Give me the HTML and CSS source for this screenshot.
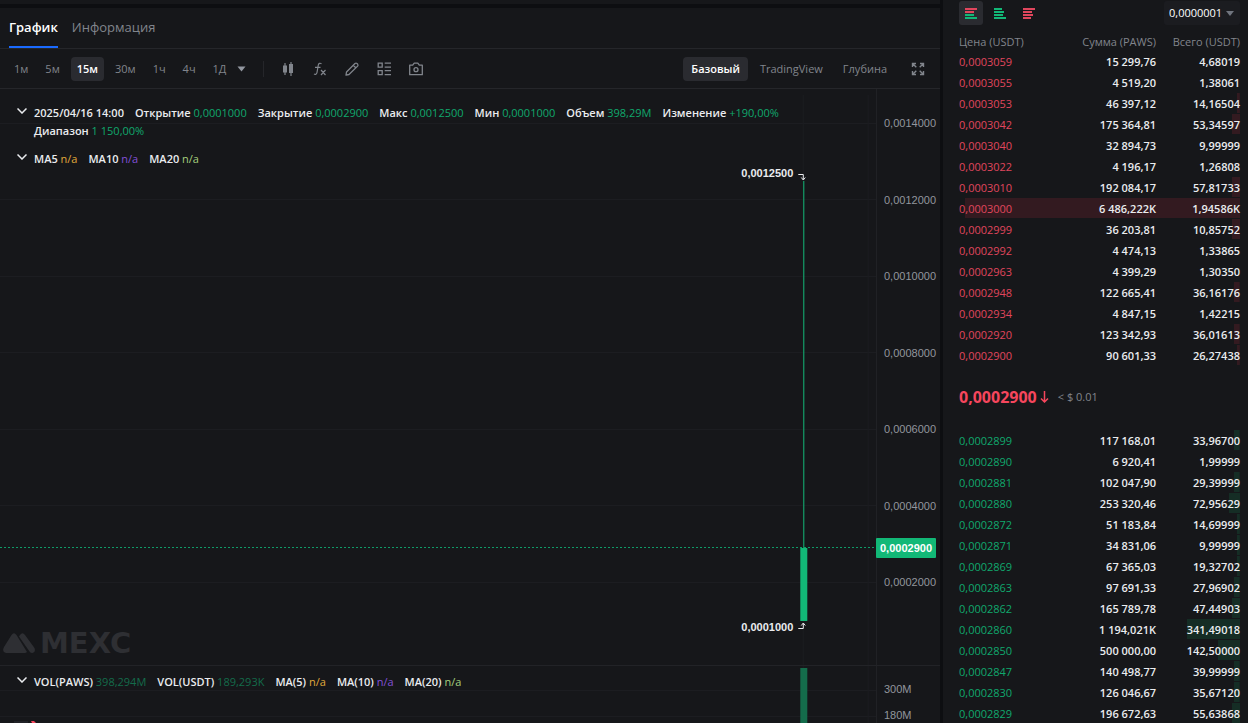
FILE: index.html
```html
<!DOCTYPE html>
<html lang="ru">
  <head>
    <meta charset="UTF-8" />
    <meta name="viewport" content="width=device-width, initial-scale=1.0" />
    <title>PAWS/USDT - MEXC</title>
    <link rel="stylesheet" href="styles.css">
  </head>
  <body>
    <main class="chart-panel">
      <nav class="tabs">
        <a class="tab active" href="#chart">График</a>
        <a class="tab" href="#info">Информация</a>
      </nav>

      <div class="toolbar">
        <div class="intervals">
          <button class="btn">1м</button>
          <button class="btn">5м</button>
          <button class="btn active">15м</button>
          <button class="btn">30м</button>
          <button class="btn">1ч</button>
          <button class="btn">4ч</button>
          <button class="btn">1Д</button>
        </div>
        <button class="more" aria-label="Интервалы">
          <svg width="9" height="6" viewBox="0 0 9 6"><path d="M0.5 0.5h8L4.5 5.5z" fill="#9297a0" /></svg>
        </button>
        <span class="divider"></span>
        <div class="tools">
          <button class="icon" aria-label="Тип графика">
            <svg viewBox="0 0 16 16" fill="currentColor"><path d="M4.400 2h1.200v2.500H7v7H5.600V14H4.400v-2.500H3v-7h1.400zM10.400 1h1.200v2H13v9h-1.400v3h-1.200v-3H9V3h1.400z" /></svg>
          </button>
          <button class="icon" aria-label="Индикаторы">
            <svg viewBox="0 0 16 16" fill="none" stroke="currentColor" stroke-width="1.200"><path d="M9.500 2.800C8 1.700 6.600 2.300 6.300 4L5 11.500c-.3 1.700-1.500 2.300-3 1.500M3 6.300h5.500M9 9l4.500 5M13.500 9L9 14" /></svg>
          </button>
          <button class="icon" aria-label="Рисование">
            <svg viewBox="0 0 16 16" fill="none" stroke="currentColor" stroke-width="1.300" stroke-linejoin="round"><path d="M2.500 11L11 2.500q1-.8 2 0l.6.600q.8 1 0 2L5 13.500l-3 .6zM9.500 4.500l2.500 2.500" /></svg>
          </button>
          <button class="icon" aria-label="Настройки">
            <svg viewBox="0 0 16 16" fill="none" stroke="currentColor" stroke-width="1.300"><path d="M2.200 2.200h4v4h-4zM2.200 9.700h4v4h-4zM8.700 2.200H15M8.700 6.200H15M8.700 9.700H15M8.700 13.700H15" /></svg>
          </button>
          <button class="icon" aria-label="Снимок">
            <svg viewBox="0 0 16 16" fill="none" stroke="currentColor" stroke-width="1.300" stroke-linejoin="round"><path d="M1.700 4.200h3l1.500-2h3.600l1.500 2h3v9.500H1.700z" /><circle cx="8" cy="8.700" r="2" /></svg>
          </button>
        </div>
        <div class="views">
          <button class="btn active">Базовый</button>
          <button class="btn">TradingView</button>
          <button class="btn">Глубина</button>
          <button class="icon" aria-label="На весь экран">
            <svg viewBox="0 0 16 16" fill="none" stroke="currentColor" stroke-width="1.400"><path d="M2.500 6V2.500H6M2.500 2.500l3.800 3.800M10 2.500h3.500V6M13.500 2.500L9.700 6.300M2.500 10v3.500H6M2.500 13.500l3.800-3.800M10 13.500h3.500V10M13.500 13.500L9.700 9.700" /></svg>
          </button>
        </div>
      </div>

      <section class="pane price-pane">
        <div class="plot">
          <svg class="canvas">
            <g class="grid">
              <path d="M0 34.500h2000M0 110.500h2000M0 187.500h2000M0 263.500h2000M0 340.500h2000M0 416.500h2000M0 493.500h2000" />
              <line x1="91.700%" x2="91.700%" y1="6" y2="100%" />
              <line x1="99.100%" x2="99.100%" y1="6" y2="100%" />
            </g>
            <line class="last-line" x1="0" x2="100%" y1="458.500" y2="458.500" />
            <svg x="91.700%" overflow="visible">
              <rect class="candle" x="0" y="92" width="1" height="367" />
              <rect class="candle" x="-3" y="459" width="7" height="73" />
              <path class="pointer" d="M-5 85.500h5v5M-2 88.500l2 2.500l2-2.500" />
              <path class="pointer" d="M-5 539.500h5v-5M-2 536.500l2-2.500l2 2.500" />
              <text class="mark" x="-10" y="88">0,0012500</text>
              <text class="mark" x="-10" y="542">0,0001000</text>
            </svg>
          </svg>
          <div class="legend">
            <div class="legend-row">
              <svg class="chevron" viewBox="0 0 10 6"><path d="M0.500 0.500L5 5l4.500-4.500" /></svg>
              <div class="legend-items">
                <span>2025/04/16 14:00</span>
                <span>Открытие <b class="up">0,0001000</b></span>
                <span>Закрытие <b class="up">0,0002900</b></span>
                <span>Макс <b class="up">0,0012500</b></span>
                <span>Мин <b class="up">0,0001000</b></span>
                <span>Объем <b class="up">398,29M</b></span>
                <span>Изменение <b class="up">+190,00%</b></span>
                <span>Диапазон <b class="up">1 150,00%</b></span>
              </div>
            </div>
            <div class="legend-row">
              <svg class="chevron" viewBox="0 0 10 6"><path d="M0.500 0.500L5 5l4.500-4.500" /></svg>
              <div class="legend-items">
                <span>MA5 <b class="ma5">n/a</b></span>
                <span>MA10 <b class="ma10">n/a</b></span>
                <span>MA20 <b class="ma20">n/a</b></span>
              </div>
            </div>
          </div>
          <div class="watermark">
            <svg width="34" height="20" viewBox="0 0 34 20" fill="currentColor"><path d="M1 14L8.500 2q2.500-3.500 5 0L24 19q-1 1-2.500 1H3Q-1.500 19 1 14zM17 2q2.500-3.500 5 0l9.500 13q1.500 4-2 5-2 0-3-1.500L16 3.500z" /></svg>
            <span>MEXC</span>
          </div>
        </div>
        <div class="axis price-axis">
          <span>0,0014000</span>
          <span>0,0012000</span>
          <span>0,0010000</span>
          <span>0,0008000</span>
          <span>0,0006000</span>
          <span>0,0004000</span>
          <span>0,0002000</span>
          <strong class="last-tag">0,0002900</strong>
        </div>
      </section>

      <section class="pane volume-pane">
        <div class="plot">
          <svg class="canvas">
            <g class="grid">
              <path d="M0 24.500h2000M0 50.500h2000" />
              <line x1="91.700%" x2="91.700%" y1="0" y2="100%" />
              <line x1="99.100%" x2="99.100%" y1="0" y2="100%" />
            </g>
            <svg x="91.700%" overflow="visible">
              <rect class="volume" x="-3" y="2" width="7" height="56" />
            </svg>
            <rect x="14" y="55" width="14" height="2" fill="#202126" />
            <path d="M31 55h3l2 2h-4z" fill="#f6465d" />
          </svg>
          <div class="legend">
            <div class="legend-row">
              <svg class="chevron" viewBox="0 0 10 6"><path d="M0.500 0.500L5 5l4.500-4.500" /></svg>
              <div class="legend-items">
                <span>VOL(PAWS) <b class="vol">398,294M</b></span>
                <span>VOL(USDT) <b class="vol">189,293K</b></span>
                <span>MA(5) <b class="ma5">n/a</b></span>
                <span>MA(10) <b class="ma10">n/a</b></span>
                <span>MA(20) <b class="ma20">n/a</b></span>
              </div>
            </div>
          </div>
        </div>
        <div class="axis volume-axis">
          <span>300M</span>
          <span>180M</span>
        </div>
      </section>
    </main>

    <aside class="order-book">
      <div class="book-bar">
        <button class="mode active" aria-label="Все заявки">
          <svg width="12" height="11"><path d="M0 1h12M0 4h9" stroke="#e0465d" /><path d="M0 7h9M0 10h12" stroke="#12b877" /></svg>
        </button>
        <button class="mode" aria-label="Покупка">
          <svg width="12" height="11"><path d="M0 1h8M0 4h10M0 7h9M0 10h12" stroke="#12b877" /></svg>
        </button>
        <button class="mode" aria-label="Продажа">
          <svg width="12" height="11"><path d="M0 1h12M0 4h9M0 7h10M0 10h8" stroke="#e0465d" /></svg>
        </button>
        <div class="step">
          <select aria-label="Шаг цены">
            <option>0,0000001</option>
          </select>
          <svg width="8" height="5" viewBox="0 0 8 5"><path d="M0 0h8L4 5z" fill="#70757e" /></svg>
        </div>
      </div>

      <table class="book asks">
        <thead>
          <tr>
            <th>Цена (USDT)</th>
            <th>Сумма (PAWS)</th>
            <th>Всего (USDT)</th>
          </tr>
        </thead>
        <tbody id="asks"></tbody>
      </table>

      <div class="last-price">
        <strong>0,0002900</strong>
        <svg width="9" height="12" viewBox="0 0 9 12"><path d="M4.500 0v11M1 7.500L4.500 11L8 7.500" /></svg>
        <span>&lt; $ 0.01</span>
      </div>

      <table class="book bids" aria-label="Покупка">
        <tbody id="bids"></tbody>
      </table>
    </aside>

    <script src="script.js"></script>
  </body>
</html>
```
FILE: styles.css
```css
* {
  box-sizing: border-box;
}

body {
  display: flex;
  gap: 3px;
  height: 100vh;
  margin: 0;
  overflow: hidden;
  background-color: #0d0e11;
  color: #eaecef;
  font-family: "Open Sans", "Noto Sans", sans-serif;
  font-size: 11px;
  line-height: 18px;
}

button {
  display: flex;
  align-items: center;
  justify-content: center;
  padding: 0;
  border: none;
  background: none;
  color: #81858c;
  font: inherit;
  cursor: pointer;
}

.chart-panel {
  display: flex;
  flex: 1;
  flex-direction: column;
  min-width: 0;
  border-top: 4px solid #16171a;
  padding-top: 4px;
}

/* tabs */
.tabs {
  display: flex;
  gap: 14px;
  height: 41px;
  padding-left: 9px;
  border-bottom: 1px solid #25262a;
  background-color: #16171a;
  font-size: 13px;
}

.tab {
  display: flex;
  align-items: center;
  border-bottom: 2px solid transparent;
  color: #81858c;
  text-decoration: none;
}

.tab.active {
  border-color: #1a6aff;
  color: #fff;
  font-weight: 600;
}

/* toolbar */
.toolbar {
  display: flex;
  align-items: center;
  height: 40px;
  padding: 0 14px 0 8px;
  border-bottom: 1px solid #25262a;
  background-color: #16171a;
}

.intervals {
  display: flex;
  gap: 5px;
}

.btn {
  height: 24px;
  padding: 0 6px;
  border-radius: 4px;
}

.btn.active {
  background-color: #2a2b30;
  color: #fff;
  font-weight: 600;
}

.more {
  margin: 0 17px 0 5px;
}

.divider {
  width: 1px;
  height: 16px;
  background-color: #25262a;
}

.tools {
  display: flex;
  gap: 16px;
  margin-left: 16px;
}

.icon svg {
  width: 16px;
  height: 16px;
}

.views {
  display: flex;
  align-items: center;
  gap: 4px;
  margin-left: auto;
}

.views .btn {
  padding: 0 8px;
}

.views .icon {
  margin-left: 11px;
}

/* chart */
.pane {
  display: flex;
  background-color: #16171a;
}

.price-pane {
  flex: 1;
  min-height: 0;
}

.volume-pane {
  height: 58px;
  border-top: 1px solid #222327;
}

.plot {
  position: relative;
  flex: 1;
  min-width: 0;
  border-right: 1px solid #202125;
}

.canvas {
  display: block;
  width: 100%;
  height: 100%;
}

.grid {
  stroke: #1c1d21;
}

.last-line {
  stroke: #0f9a67;
  stroke-dasharray: 2 2;
}

.candle {
  fill: #12b877;
}

.volume {
  fill: #146c4b;
}

.pointer {
  fill: none;
  stroke: #eaecef;
}

.mark {
  fill: #eaecef;
  font-family: "Liberation Sans", Arial, sans-serif;
  font-size: 11px;
  font-weight: 700;
  text-anchor: end;
}

.legend {
  position: absolute;
  top: 15px;
  left: 17px;
  right: 60px;
  display: flex;
  flex-direction: column;
  gap: 10px;
}

.volume-pane .legend {
  top: 7px;
}

.legend-row {
  display: flex;
  gap: 7px;
}

.chevron {
  flex: none;
  width: 10px;
  height: 6px;
  margin-top: 4px;
  fill: none;
  stroke: #eaecef;
  stroke-width: 1.5;
}

.legend-items {
  display: flex;
  flex-wrap: wrap;
  column-gap: 11px;
  font-weight: 600;
}

.legend-items b {
  font-weight: 400;
}

.up {
  color: #10a86d;
}

.vol {
  color: #146c4b;
}

.ma5 {
  color: #e0a93b;
}

.ma10 {
  color: #8250d8;
}

.ma20 {
  color: #a5cf7d;
}

.watermark {
  position: absolute;
  left: 3px;
  bottom: 12px;
  display: flex;
  align-items: center;
  gap: 3px;
  color: #2e2f33;
  font-family: "DejaVu Sans", sans-serif;
  font-size: 29px;
  font-weight: 700;
  line-height: 20px;
}

.axis {
  position: relative;
  display: flex;
  flex-direction: column;
  width: 63px;
  padding-left: 7px;
  color: #92969d;
  font-family: "Liberation Sans", Arial, sans-serif;
  line-height: 16px;
}

.price-axis {
  justify-content: space-between;
  padding-top: 26px;
  padding-bottom: 75px;
}

.volume-axis {
  gap: 10px;
  padding-top: 15px;
}

.last-tag {
  position: absolute;
  top: 449px;
  left: -1px;
  padding: 0 4px;
  border-radius: 1px;
  background-color: #12b877;
  color: #fff;
  line-height: 20px;
}

/* order book */
.order-book {
  width: 305px;
  padding: 1px 8px 0 16px;
  overflow: hidden;
  background-color: #16171a;
}

.book-bar {
  display: flex;
  align-items: center;
  gap: 5px;
  height: 24px;
}

.mode {
  width: 24px;
  height: 24px;
  border-radius: 3px;
}

.mode.active {
  background-color: #2a2b30;
}

.mode svg {
  fill: none;
  stroke-width: 2;
}

.step {
  display: flex;
  align-items: center;
  gap: 3px;
  height: 24px;
  margin-left: auto;
  padding: 0 6px 0 5px;
  border-radius: 3px;
  background-color: #1b1c20;
}

.step select {
  padding: 0;
  border: none;
  appearance: none;
  background: none;
  color: #fff;
  font: inherit;
}

.book {
  width: 100%;
  border-collapse: collapse;
  table-layout: fixed;
}

.book th {
  height: 26px;
  padding: 8px 0 0;
  color: #81858c;
  font-weight: 400;
  white-space: nowrap;
}

.book td {
  height: 21px;
  padding: 0;
  font-weight: 600;
}

.book th,
.book td {
  width: 84px;
  text-align: right;
}

.book th:first-child,
.book td:first-child {
  width: auto;
  font-weight: 400;
  text-align: left;
}

.book tbody tr {
  background-position: right top;
  background-repeat: no-repeat;
  background-size: var(--depth) 20px;
}

.asks tbody tr {
  background-image: linear-gradient(#331a20, #331a20);
}

.asks td:first-child {
  color: #e0465d;
}

.bids tbody tr {
  background-image: linear-gradient(#152d25, #152d25);
}

.bids td:first-child {
  color: #10a86d;
}

.last-price {
  display: flex;
  align-items: center;
  gap: 3px;
  height: 64px;
  padding-bottom: 2px;
  color: #f6465d;
}

.last-price strong {
  font-size: 16px;
}

.last-price svg {
  fill: none;
  stroke: currentColor;
  stroke-width: 1.5;
}

.last-price span {
  margin-left: 6px;
  color: #81858c;
}
```
FILE: script.js
```js
// price, amount, total, depth in %
const asks = [
  ["0,0003059", "15 299,76", "4,68019", 0],
  ["0,0003055", "4 519,20", "1,38061", 0],
  ["0,0003053", "46 397,12", "14,16504", 1],
  ["0,0003042", "175 364,81", "53,34597", 3],
  ["0,0003040", "32 894,73", "9,99999", 0],
  ["0,0003022", "4 196,17", "1,26808", 0],
  ["0,0003010", "192 084,17", "57,81733", 3],
  ["0,0003000", "6 486,222K", "1,94586K", 98],
  ["0,0002999", "36 203,81", "10,85752", 3],
  ["0,0002992", "4 474,13", "1,33865", 0],
  ["0,0002963", "4 399,29", "1,30350", 0],
  ["0,0002948", "122 665,41", "36,16176", 2],
  ["0,0002934", "4 847,15", "1,42215", 0],
  ["0,0002920", "123 342,93", "36,01613", 2],
  ["0,0002900", "90 601,33", "26,27438", 1],
];

const bids = [
  ["0,0002899", "117 168,01", "33,96700", 2],
  ["0,0002890", "6 920,41", "1,99999", 0],
  ["0,0002881", "102 047,90", "29,39999", 2],
  ["0,0002880", "253 320,46", "72,95629", 4],
  ["0,0002872", "51 183,84", "14,69999", 1],
  ["0,0002871", "34 831,06", "9,99999", 1],
  ["0,0002869", "67 365,03", "19,32702", 1],
  ["0,0002863", "97 691,33", "27,96902", 2],
  ["0,0002862", "165 789,78", "47,44903", 3],
  ["0,0002860", "1 194,021K", "341,49018", 19],
  ["0,0002850", "500 000,00", "142,50000", 8],
  ["0,0002847", "140 498,77", "39,99999", 2],
  ["0,0002830", "126 046,67", "35,67120", 2],
  ["0,0002829", "196 672,63", "55,63868", 3],
];

function renderRows(id, rows) {
  document.getElementById(id).innerHTML = rows
    .map(
      ([price, amount, total, depth]) =>
        `<tr style="--depth: ${depth}%"><td>${price}</td><td>${amount}</td><td>${total}</td></tr>`
    )
    .join("");
}

renderRows("asks", asks);
renderRows("bids", bids);
```
